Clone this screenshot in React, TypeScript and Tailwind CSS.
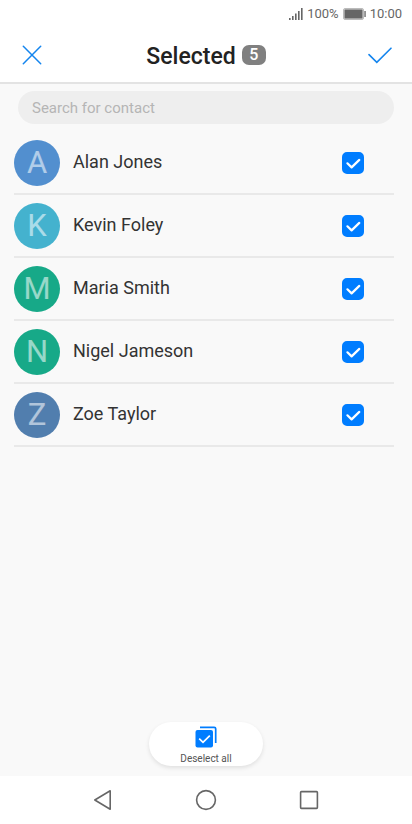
import { useState } from 'react';

interface Contact {
  id: number;
  name: string;
  color: string;
}

const contacts: Contact[] = [
  { id: 1, name: 'Alan Jones', color: 'bg-[#528fcf]' },
  { id: 2, name: 'Kevin Foley', color: 'bg-[#44b2ce]' },
  { id: 3, name: 'Maria Smith', color: 'bg-[#17a988]' },
  { id: 4, name: 'Nigel Jameson', color: 'bg-[#17a988]' },
  { id: 5, name: 'Zoe Taylor', color: 'bg-[#517eae]' },
];

function StatusBar() {
  return (
    <div className="flex h-7 items-center justify-end gap-1 bg-white pr-2.5 text-[13px] text-[#666]">
      <svg width="14" height="12" viewBox="0 0 14 12" fill="#666">
        <rect x="0" y="10" width="1.6" height="2" />
        <rect x="3" y="8" width="1.6" height="4" />
        <rect x="6" y="5.5" width="1.6" height="6.5" />
        <rect x="9" y="3" width="1.6" height="9" />
        <rect x="12" y="0" width="1.6" height="12" />
      </svg>
      <span>100%</span>
      <svg width="23" height="12" viewBox="0 0 23 12">
        <rect x="0.5" y="0.5" width="20" height="11" rx="1.5" fill="#ddd" stroke="#bbb" />
        <rect x="1.5" y="1.5" width="18" height="9" rx="0.5" fill="#666" />
        <rect x="21.3" y="3" width="1.5" height="6" fill="#777" />
      </svg>
      <span>10:00</span>
    </div>
  );
}

function NavBar() {
  return (
    <nav className="grid h-12 grid-cols-3 place-items-center bg-white px-13">
      <button type="button" aria-label="Back">
        <svg width="22" height="22" viewBox="0 0 22 22" fill="none" stroke="#666" strokeWidth="1.6" strokeLinejoin="round">
          <path d="M2.8 11 18.2 1.8v18.4z" />
        </svg>
      </button>
      <button type="button" aria-label="Home">
        <svg width="22" height="22" viewBox="0 0 22 22" fill="none" stroke="#666" strokeWidth="1.6">
          <circle cx="11" cy="11" r="9.4" />
        </svg>
      </button>
      <button type="button" aria-label="Recent apps">
        <svg width="22" height="22" viewBox="0 0 22 22" fill="none" stroke="#666" strokeWidth="1.6">
          <rect x="2.6" y="2.6" width="16.8" height="16.8" rx="0.8" />
        </svg>
      </button>
    </nav>
  );
}

function ContactRow({ contact, checked, onToggle }: { contact: Contact; checked: boolean; onToggle: () => void }) {
  return (
    <li className="border-b-2 border-[#e9e9e9]">
      <label className="flex h-[61px] items-center">
        <span aria-hidden="true" className={`flex size-[46px] items-center justify-center rounded-full text-[31px] leading-none text-white/55 ${contact.color}`}>
          {contact.name[0]}
        </span>
        <span className="ml-[13px] flex-1 pb-0.5 text-lg text-[#333]">{contact.name}</span>
        <span className="relative mr-[30px] size-[22px]">
          <input type="checkbox" checked={checked} onChange={onToggle}
            className="block size-[22px] appearance-none rounded-[5px] border-2 border-[#aaa] checked:border-[#007dff] checked:bg-[#007dff]" />
          {checked && (
            <svg viewBox="0 0 22 22" fill="none" stroke="white" strokeWidth="2.2" strokeLinecap="round" strokeLinejoin="round" className="pointer-events-none absolute inset-0">
              <path d="M5.4 11.3 9.6 15.4 17.3 7.9" />
            </svg>
          )}
        </span>
      </label>
    </li>
  );
}

export default function App() {
  const [selected, setSelected] = useState<number[]>(contacts.map((c) => c.id));
  const [query, setQuery] = useState('');

  const toggle = (id: number) => {
    setSelected((prev) => (prev.includes(id) ? prev.filter((x) => x !== id) : [...prev, id]));
  };

  const visible = contacts.filter((c) => c.name.toLowerCase().includes(query.toLowerCase()));
  const hasSelection = selected.length > 0;

  return (
    <div className="flex min-h-screen flex-col bg-[#f9f9f9] font-[Roboto,sans-serif]">
      <StatusBar />

      <header className="flex h-14 items-center justify-between border-b-2 border-[#e3e3e3] bg-white px-5">
        <button type="button" aria-label="Cancel">
          <svg width="24" height="24" viewBox="0 0 24 24" fill="none" stroke="#1485ee" strokeWidth="1.5" strokeLinecap="round">
            <path d="M3.3 3.3 20.7 20.7M20.7 3.3 3.3 20.7" />
          </svg>
        </button>
        <div className="flex items-center gap-1.5">
          <h1 className="pt-1 text-[23px] font-medium text-[#222]">Selected</h1>
          <span className="flex h-5 w-6 items-center justify-center rounded-[7px] bg-[#808080] text-base font-medium text-white">{selected.length}</span>
        </div>
        <button type="button" aria-label="Confirm">
          <svg width="24" height="24" viewBox="0 0 24 24" fill="none" stroke="#1485ee" strokeWidth="1.6" strokeLinecap="round">
            <path d="M1 11.6 8.8 19.4 23 5.2" />
          </svg>
        </button>
      </header>

      <main className="flex flex-1 flex-col pb-2.5">
        <input type="search" aria-label="Search for contact" placeholder="Search for contact" value={query} onChange={(e) => setQuery(e.target.value)}
          className="mx-[18px] mt-[7px] mb-2 h-[33px] rounded-full bg-[#eee] px-3.5 text-[15px] text-[#333] placeholder:text-[#b5b5b5] focus:outline-none" />

        <ul className="mr-[18px] ml-3.5">
          {visible.map((c) => (
            <ContactRow key={c.id} contact={c} checked={selected.includes(c.id)} onToggle={() => toggle(c.id)} />
          ))}
        </ul>

        <button type="button" onClick={() => setSelected(hasSelection ? [] : contacts.map((c) => c.id))}
          className="mx-auto mt-auto flex h-11 w-[114px] flex-col items-center gap-1 rounded-full bg-white pt-1 text-[10px] text-[#555] shadow-[0_2px_4px_rgba(0,0,0,0.1)]">
          <svg width="22" height="22" viewBox="0 0 22 22" fill="none" className="shrink-0">
            <path d="M5 1.3H19.2Q20.7 1.3 20.7 2.8V17" stroke="#007dff" strokeWidth="1.7" />
            <rect x="0.5" y="4" width="17.5" height="17.5" rx="2" fill="#007dff" />
            <path d="M4.2 12.7 8 16.4 14.8 9.6" stroke="white" strokeWidth="1.7" />
          </svg>
          <span className="leading-[14px]">{hasSelection ? 'Deselect all' : 'Select all'}</span>
        </button>
      </main>

      <NavBar />
    </div>
  );
}
